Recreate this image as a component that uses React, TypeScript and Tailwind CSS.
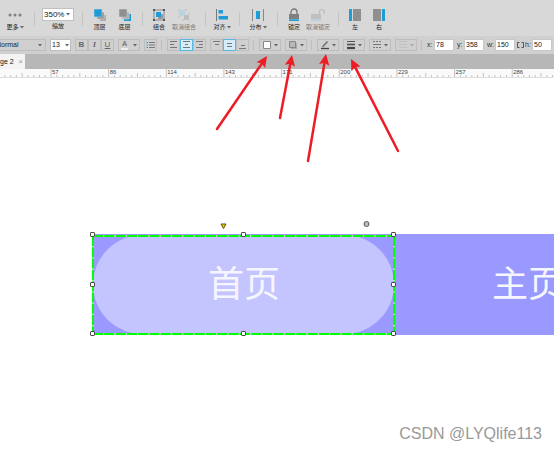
import type { ReactNode } from 'react';

const BLUE = '#1e9cd7';
const GRAY = '#8f8f8f';

function Sep() {
  return <div className="flex w-2.5 shrink-0 justify-center self-stretch py-2.5"><span className="w-px bg-[#c4c4c4]" /></div>;
}

function Tool({ label, icon, width = 'w-6', muted = false, menu = false }: { label: string; icon: ReactNode; width?: string; muted?: boolean; menu?: boolean }) {
  return (
    <button type="button" className={`flex shrink-0 flex-col items-center gap-px whitespace-nowrap ${width} ${muted ? 'text-[#777]' : 'text-[#222]'}`}>
      <svg className="h-3.5 w-3.5" viewBox="0 0 14 14" fill="none">{icon}</svg>
      <span className="flex items-center text-[6px] leading-2">
        {label}
        {menu && <Caret />}
      </span>
    </button>
  );
}

function Caret({ light = false }: { light?: boolean }) {
  return (
    <svg className="ml-px h-1 w-1 shrink-0" viewBox="0 0 4 4">
      <path d="M0 1h4L2 3.5z" fill={light ? '#aaa' : '#666'} />
    </svg>
  );
}

function SmallButton({ label, children, active = false }: { label: string; children: ReactNode; active?: boolean }) {
  return (
    <button
      type="button"
      aria-label={label}
      className={`flex h-3 w-[13px] items-center justify-center border ${active ? 'border-[#5cb8e0] bg-[#d4edf8]' : 'border-[#bdbdbd]'}`}
    >
      {children}
    </button>
  );
}

function DropButton({ label, children, light = false }: { label: string; children: ReactNode; light?: boolean }) {
  return (
    <button type="button" aria-label={label} className="flex h-3 w-[22px] shrink-0 items-center justify-between border border-[#bdbdbd] px-0.5">
      <svg className="h-2.5 w-2.5" viewBox="0 0 10 10" fill="none">{children}</svg>
      <Caret light={light} />
    </button>
  );
}

function Lines({ d }: { d: string }) {
  return (
    <svg className="h-2.5 w-[11px]" viewBox="0 0 11 10" fill="none">
      <path d={d} stroke="#777" strokeWidth="1" />
    </svg>
  );
}

function Field({ name, value, width = 'w-[7px]' }: { name: string; value: string; width?: string }) {
  return (
    <label className="flex shrink-0 items-center">
      <span className={`text-[7px] leading-3 text-[#333] ${width}`}>{name}:</span>
      <input type="text" defaultValue={value} className="h-3 w-5 border border-[#c8c8c8] bg-white px-px text-[7px] leading-3 text-[#222]" />
    </label>
  );
}

const FormatSep = () => <span className="h-2.5 w-0.5 shrink-0 border-l border-[#bdbdbd]" />;

function MainToolbar() {
  return (
    <div className="flex h-9 shrink-0 items-center overflow-hidden bg-[#d8d8d8] pt-0.5 pl-px">
      <Tool
        label="更多"
        width="w-7"
        menu
        icon={<g fill="#808080"><circle cx="2" cy="7" r="1.500" /><circle cx="7" cy="7" r="1.500" /><circle cx="12" cy="7" r="1.500" /></g>}
      />
      <Sep />
      <label className="flex w-[38px] shrink-0 flex-col items-center gap-px text-[#222]">
        <span className="relative">
          <select className="block h-[13px] w-8 appearance-none border border-[#c0c0c0] bg-white pl-px text-[8px] leading-3">
            <option>350%</option>
          </select>
          <span className="pointer-events-none absolute top-1 right-1 flex"><Caret /></span>
        </span>
        <span className="text-[6px] leading-2">缩放</span>
      </label>
      <Sep />
      <Tool
        label="顶层"
        width="w-[25px]"
        icon={<><path d="M7 7h6v6H7z" fill="#a9a9a9" /><path d="M4 4h7v7H4z" fill="#8c8c8c" stroke="#d8d8d8" strokeWidth=".6" /><path d="M1 1h8v8H1z" fill={BLUE} stroke="#d8d8d8" strokeWidth=".5" /></>}
      />
      <Tool
        label="底层"
        width="w-[25px]"
        icon={<><path d="M6 6h7v7H6z" fill={BLUE} /><path d="M4 4h7v7H4z" fill="#a9a9a9" stroke="#d8d8d8" strokeWidth=".6" /><path d="M1 1h8v8H1z" fill={GRAY} stroke="#d8d8d8" strokeWidth=".5" /></>}
      />
      <Sep />
      <Tool
        label="组合"
        icon={<><path d="M2 2h10v10H2z" stroke="#777" strokeWidth=".8" /><path d="M6 6h5v5H6z" fill="#999" /><path d="M4 4h5v5H4z" fill={BLUE} /><path d="M1 1h2v2H1zM11 1h2v2h-2zM1 11h2v2H1zM11 11h2v2h-2z" fill="#555" /></>}
      />
      <Tool
        label="取消组合"
        width="w-[29px] pr-[3px]"
        muted
        icon={<><path d="M2 2h6v6H2z" fill="#b9d3df" /><path d="M7 7h5v5H7z" fill="#bebebe" /><path d="M1 1h2v2H1zM8 1h2v2H8zM1 8h2v2H1zM11 5h2v2h-2zM5 11h2v2H5zM11 11h2v2h-2z" fill="#c3ccd0" /></>}
      />
      <Sep />
      <Tool label="对齐" menu icon={<><path d="M1.500 1v12" stroke="#777" /><path d="M3.500 2h4.500v3.500H3.500zM3.500 8h9.500v3.500H3.500z" fill={BLUE} /></>} />
      <Sep />
      <Tool label="分布" width="w-7" menu icon={<><path d="M1.500 1v12M12.500 1v12" stroke="#888" /><path d="M5 3h4v8H5z" fill={BLUE} /></>} />
      <Sep />
      <Tool
        label="锁定"
        icon={<><path d="M4 6V4a3 3 0 0 1 6 0v2" stroke="#777" strokeWidth="1.300" /><path d="M2 6h10v5H2z" fill="#808080" /><path d="M2 11.300h10v1.700H2z" fill={BLUE} /></>}
      />
      <Tool
        label="取消锁定"
        width="w-[27px] pr-[3px]"
        muted
        icon={<><path d="M8.500 6V4a2.500 2.500 0 0 1 5 0v2" stroke="#bdbdbd" strokeWidth="1.200" /><path d="M0 6h10v5H0z" fill="#c0c0c0" /><path d="M0 11.300h10v1.700H0z" fill="#b4d2e0" /></>}
      />
      <Sep />
      <Tool label="左" icon={<><path d="M1 1h3v12H1z" fill={BLUE} /><path d="M5 1h8v12H5z" fill={GRAY} /></>} />
      <Tool label="右" icon={<><path d="M1 1h8v12H1z" fill={GRAY} /><path d="M10 1h3v12h-3z" fill={BLUE} /></>} />
    </div>
  );
}

function FormatToolbar() {
  return (
    <div className="flex h-[18px] shrink-0 items-center gap-1 overflow-hidden bg-[#d0d0d0]">
      <span className="relative -ml-2 shrink-0">
        <select aria-label="Style" className="block h-3 w-[54px] appearance-none border border-[#bdbdbd] pl-[3px] text-[7px] leading-2.5 text-[#222]">
          <option>Normal</option>
        </select>
        <span className="pointer-events-none absolute top-1 right-1 flex"><Caret /></span>
      </span>
      <span className="relative shrink-0">
        <select aria-label="Font size" className="block h-3 w-[21px] appearance-none border border-[#bdbdbd] bg-white pl-px text-[7px] leading-2.5 text-[#222]">
          <option>13</option>
        </select>
        <span className="pointer-events-none absolute top-1 right-0.5 flex"><Caret /></span>
      </span>
      <div className="flex shrink-0 text-[8px] leading-2.5 text-[#666]">
        <SmallButton label="Bold"><b>B</b></SmallButton>
        <SmallButton label="Italic"><i className="font-serif font-bold">I</i></SmallButton>
        <SmallButton label="Underline"><u>U</u></SmallButton>
      </div>
      <button type="button" aria-label="Text color" className="flex h-3 w-[22px] shrink-0 items-center justify-between border border-[#bdbdbd] px-0.5">
        <span className="border-b-2 border-[#eee] px-px text-[7px] leading-2 font-bold text-[#777]">A</span>
        <Caret />
      </button>
      <SmallButton label="Bullets">
        <svg className="h-2.5 w-[11px]" viewBox="0 0 11 10" fill="none">
          <path d="M4 2.500h6M4 5h6M4 7.500h6" stroke="#777" />
          <path d="M1.500 2.500H3M1.500 5H3M1.500 7.500H3" stroke={BLUE} />
        </svg>
      </SmallButton>
      <FormatSep />
      <div className="flex shrink-0">
        <SmallButton label="Align left"><Lines d="M2 1.500h7M2 4.500h4M2 7.500h7" /></SmallButton>
        <SmallButton label="Align center" active><Lines d="M2 1.500h7M4 4.500h3M2 7.500h7" /></SmallButton>
        <SmallButton label="Align right"><Lines d="M2 1.500h7M5 4.500h4M2 7.500h7" /></SmallButton>
      </div>
      <div className="flex shrink-0">
        <SmallButton label="Align top"><Lines d="M2 1.500h7M4 4.500h4" /></SmallButton>
        <SmallButton label="Align middle" active><Lines d="M3 3.500h5M3 6.500h5" /></SmallButton>
        <SmallButton label="Align bottom"><Lines d="M4 5.500h4M2 8.500h7" /></SmallButton>
      </div>
      <FormatSep />
      <DropButton label="Fill"><path d="M1.500 1.500h7v7h-7z" fill="#fff" stroke="#888" /></DropButton>
      <DropButton label="Shadow"><path d="M3 3h6v6H3z" fill="#aaa" /><path d="M1.500 1.500h6v6h-6z" fill="#b8b8b8" stroke="#858585" /></DropButton>
      <FormatSep />
      <DropButton label="Line color"><path d="M2.500 7 7.500 1.500" stroke="#777" strokeWidth="1.800" /><path d="M1 8.500h8" stroke="#444" strokeWidth="1.300" /></DropButton>
      <DropButton label="Line width"><path d="M1 1.500h8" stroke="#555" /><path d="M1 4.500h8" stroke="#555" strokeWidth="1.700" /><path d="M1 8h8" stroke="#444" strokeWidth="2.200" /></DropButton>
      <DropButton label="Line style"><path d="M1 1.500h8" stroke="#777" strokeDasharray="2 1" /><path d="M1 4.500h8" stroke="#777" /><path d="M1 7.500h8" stroke="#777" strokeDasharray="2 1" /></DropButton>
      <DropButton label="Arrow style" light><path d="M1 1.500h8M1 4.500h8M1 7.500h8" stroke="#c0c0c0" /></DropButton>
      <FormatSep />
      <div className="flex shrink-0 items-center gap-[3px]">
        <Field name="x" value="78" />
        <Field name="y" value="358" />
        <Field name="w" value="150" width="w-2" />
      </div>
      <div className="-ml-0.5 flex shrink-0 items-center gap-px">
        <svg className="h-2 w-[7px]" viewBox="0 0 7 8" fill="none">
          <path d="M2.500 1.500H.5v5h2M4.500 1.500h2v5h-2" stroke="#555" />
        </svg>
        <Field name="h" value="50" />
      </div>
    </div>
  );
}

const marks = [57, 86, 114, 143, 171, 200, 229, 257, 286];
const STEP = 57.65;

function Ruler() {
  const start = 51;
  const ticks = Array.from({ length: 400 }, (_, i) => i - 8);
  return (
    <svg className="h-[9px] w-full shrink-0 border-b border-[#ddd] bg-[#fafafa]">
      {ticks.map((i) => {
        const x = start + (i * STEP) / 10;
        const top = i % 10 === 0 ? 0 : i % 5 === 0 ? 4 : 6;
        return <line key={i} x1={x} x2={x} y1={top} y2="8" stroke="#aaa" strokeWidth=".7" />;
      })}
      {marks.map((m, i) => (
        <text key={m} x={start + 1 + i * STEP} y="5" fontSize="6" fill="#444">{m}</text>
      ))}
    </svg>
  );
}

const handles = [[93, 157], [244, 157], [394, 157], [93, 207], [394, 207], [93, 256], [244, 256], [394, 256]];

function Canvas() {
  return (
    <main className="relative min-h-[373px] flex-1 overflow-hidden bg-white">
      <div className="absolute top-[156px] right-0 left-[92px] h-[101px] bg-[#9999ff]" />
      <div className="absolute top-[157px] left-[93px] h-[99px] w-[301px] rounded-[50px] bg-[#c4c4ff]" />
      <p className="absolute top-[181px] left-[208px] text-[36px] leading-[52px] whitespace-nowrap text-[#f6f6ff]">首页</p>
      <p className="absolute top-[181px] left-[492px] text-[36px] leading-[52px] whitespace-nowrap text-[#f6f6ff]">主页</p>
      <svg className="absolute top-0 left-0 h-full w-full" fill="none">
        <path d="M93 158H394M93 256H394M93 158V256M394 158V256" stroke="#b5e6c8" strokeWidth="2" />
        <path d="M93 158H394M93 256H394M93 158V256M394 158V256" stroke="#00ff00" strokeWidth="2" strokeDasharray="10 1.300" />
        {handles.map(([x, y]) => (
          <rect key={`${x}-${y}`} x={x - 1.5} y={y - 1.5} width="4" height="4" rx=".6" fill="#fff" stroke="#444" transform="translate(-1 -1)" />
        ))}
        <path d="M221 146h5l-2.500 4.500z" fill="#f5c400" stroke="#665500" />
        <circle cx="366.500" cy="146" r="2.500" fill="#bbb" stroke="#555" />
      </svg>
      <p className="absolute right-3 bottom-[7px] text-[16px] leading-5 text-[#999]">CSDN @LYQlife113</p>
    </main>
  );
}

// [tail x, tail y, tip x, tip y]
const arrows = [
  [217, 129, 267, 56],
  [280, 118, 292, 55],
  [308, 161, 326, 54],
  [398, 151, 351, 59],
];

function Arrows() {
  return (
    <svg className="pointer-events-none absolute top-0 left-0 h-full w-full" fill="none">
      {arrows.map(([x1, y1, x2, y2]) => {
        const len = Math.hypot(x2 - x1, y2 - y1);
        const angle = (Math.atan2(y2 - y1, x2 - x1) * 180) / Math.PI;
        return (
          <g key={x1} transform={`translate(${x1} ${y1}) rotate(${angle})`}>
            <line x2={len - 8} stroke="#ee1c25" strokeWidth="2.500" strokeLinecap="round" />
            <path d={`M${len} 0l-11-5.200 2 5.200-2 5.200z`} fill="#ee1c25" />
          </g>
        );
      })}
    </svg>
  );
}

export default function App() {
  return (
    <div className="relative flex min-h-screen flex-col overflow-hidden font-['Liberation_Sans','Noto_Sans_CJK_SC',sans-serif]">
      <MainToolbar />
      <FormatToolbar />
      <div className="flex h-[15px] shrink-0 bg-[#b7b7b7]">
        <div className="flex w-[25px] items-center justify-between overflow-hidden bg-[#f4f4f4] pr-0.5 text-[7px] leading-3">
          <span className="whitespace-nowrap text-[#111]">ge 2</span>
          <button type="button" aria-label="Close" className="text-[8px] text-[#999]">×</button>
        </div>
      </div>
      <Ruler />
      <Canvas />
      <Arrows />
    </div>
  );
}
